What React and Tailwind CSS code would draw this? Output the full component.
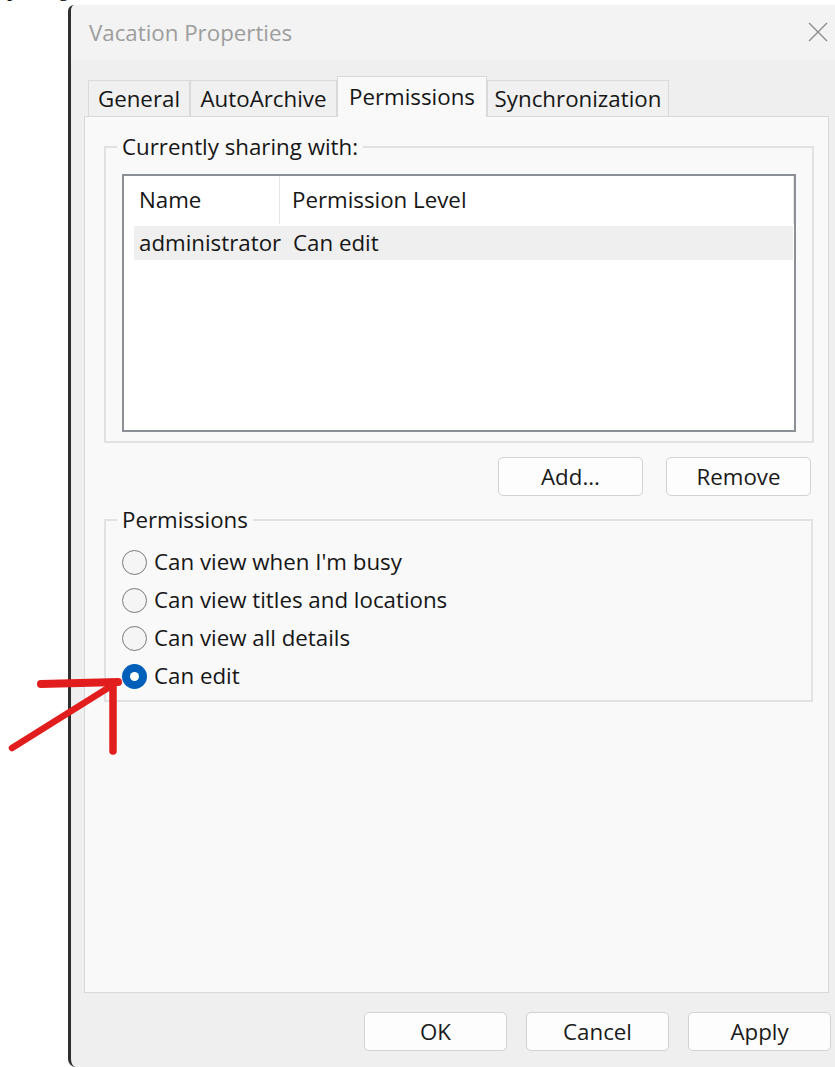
import { useState } from 'react'

const tabs = [
  { name: "General", w: "w-[102px]" },
  { name: "AutoArchive", w: "w-[147px]" },
  { name: "Permissions", w: "w-[150px]" },
  { name: "Synchronization", w: "w-[182px]" }
]

const levels = [
  "Can view when I'm busy",
  "Can view titles and locations",
  "Can view all details",
  "Can edit"
]

function Radio({ label, checked, onPick }) {
  return (
    <div onClick={onPick} className="flex items-center gap-[7px] h-[38px] cursor-default">
      {checked ? (
        <span className="w-[25px] h-[25px] rounded-full bg-[#005fb8] flex items-center justify-center">
          <span className="w-[9px] h-[9px] rounded-full bg-white"></span>
        </span>
      ) : (
        <span className="w-[25px] h-[25px] rounded-full border-[1.5px] border-[#7b7b7b] bg-[#f5f5f5]"></span>
      )}
      <span className="leading-[28px]">{label}</span>
    </div>
  )
}

function Button({ children, w }) {
  return (
    <button className={"h-[39px] rounded-[5px] border border-[#d2d2d2] bg-[#fdfdfd] text-[#1a1a1a] " + w}>
      {children}
    </button>
  )
}

function App() {
  const [tab, setTab] = useState("Permissions")
  const [level, setLevel] = useState("Can edit")

  return (
    <div className="relative w-[835px] h-[1067px] bg-white overflow-hidden font-['Open_Sans','Noto_Sans',sans-serif] text-[22.3px] font-medium text-[#161616]">
      {/* bottom of the document line above the dialog */}
      <div className="h-[5px] overflow-hidden">
        <p className="font-['Liberation_Serif',serif] font-normal text-[21px] leading-[21px] mt-[-21px] ml-[7px] text-black">placing one,</p>
      </div>

      <div className="ml-[68px] w-[780px] h-[1062px] flex flex-col bg-[#efefef] border-l-[3px] border-[#2f2f2f] rounded-tl-[6px] rounded-bl-[8px]">
        <div className="h-[55px] shrink-0 flex items-center justify-between pl-[18px] pr-[20px] bg-[#f3f3f3] rounded-tl-[6px]">
          <span className="text-[#9d9d9d] leading-[28px]">Vacation Properties</span>
          <svg width="20" height="20" viewBox="0 0 20 20" className="mt-[-2px]">
            <path d="M1 1 L19 19 M19 1 L1 19" stroke="#8c8c8c" strokeWidth="1.4" fill="none" />
          </svg>
        </div>

        <div className="flex-1 flex flex-col pt-[16px] pl-[13px] pr-[19px] pb-[16px]">
          <div className="flex items-end pl-[4px] h-[40px] shrink-0">
            {tabs.map(t => (
              t.name === tab ? (
                <div key={t.name} className={"relative z-10 h-[41px] -mb-px flex items-center justify-center border border-b-0 border-[#d9d9d9] bg-[#f9f9f9] " + t.w}>
                  {t.name}
                </div>
              ) : (
                <div key={t.name} onClick={() => setTab(t.name)} className={"h-[36px] flex items-center justify-center border border-b-0 border-[#dadada] bg-[#f0f0f0] cursor-default " + t.w}>
                  {t.name}
                </div>
              )
            ))}
          </div>

          <div className="flex-1 flex flex-col border border-[#d9d9d9] bg-[#f9f9f9] pt-[16px] pl-[19px] pr-[15px]">
            <fieldset className="border-2 border-[#e2e2e2] pt-[13px] pl-[16px] pr-[16px] pb-[9px]">
              <legend className="ml-[-5px] px-[5px] leading-[28px]">Currently sharing with:</legend>
              <div className="h-[258px] border-2 border-[#8b9097] bg-white">
                <div className="flex h-[48px] w-[670px] border-r border-[#e6e6e6]">
                  <div className="w-[156px] pl-[15px] flex items-center border-r border-[#e6e6e6]">Name</div>
                  <div className="pl-[12px] flex items-center">Permission Level</div>
                </div>
                <div className="flex items-center h-[34px] mt-[2px] ml-[10px] w-[659px] bg-[#efefef]">
                  <div className="w-[146px] pl-[5px] whitespace-nowrap">administrator</div>
                  <div className="pl-[13px]">{level}</div>
                </div>
              </div>
            </fieldset>

            <div className="flex justify-end gap-[23px] mt-[14px] pr-[2px]">
              <Button w="w-[145px]">Add...</Button>
              <Button w="w-[145px]">Remove</Button>
            </div>

            <fieldset className="mt-[10px] border-2 border-[#e2e2e2] pt-[9px] pl-[16px] pr-[16px] pb-[5px]">
              <legend className="ml-[-5px] px-[5px] leading-[28px]">Permissions</legend>
              {levels.map(l => (
                <Radio key={l} label={l} checked={l === level} onPick={() => setLevel(l)} />
              ))}
            </fieldset>
          </div>

          <div className="flex justify-end gap-[19px] mt-[19px] mr-[-2px] shrink-0">
            <Button w="w-[143px]">OK</Button>
            <Button w="w-[143px]">Cancel</Button>
            <Button w="w-[143px]">Apply</Button>
          </div>
        </div>
      </div>

      {/* red marker arrow drawn over the dialog */}
      <svg className="absolute left-0 top-[675px] pointer-events-none" width="125" height="85" viewBox="0 0 125 85">
        <path d="M41 9 L118 7" stroke="#e11d1d" strokeWidth="8" strokeLinecap="round" fill="none" />
        <path d="M113 9 L113 76" stroke="#e11d1d" strokeWidth="7.5" strokeLinecap="round" fill="none" />
        <path d="M12 73 L108 13" stroke="#e11d1d" strokeWidth="6.5" strokeLinecap="round" fill="none" />
      </svg>
    </div>
  )
}

export default App
